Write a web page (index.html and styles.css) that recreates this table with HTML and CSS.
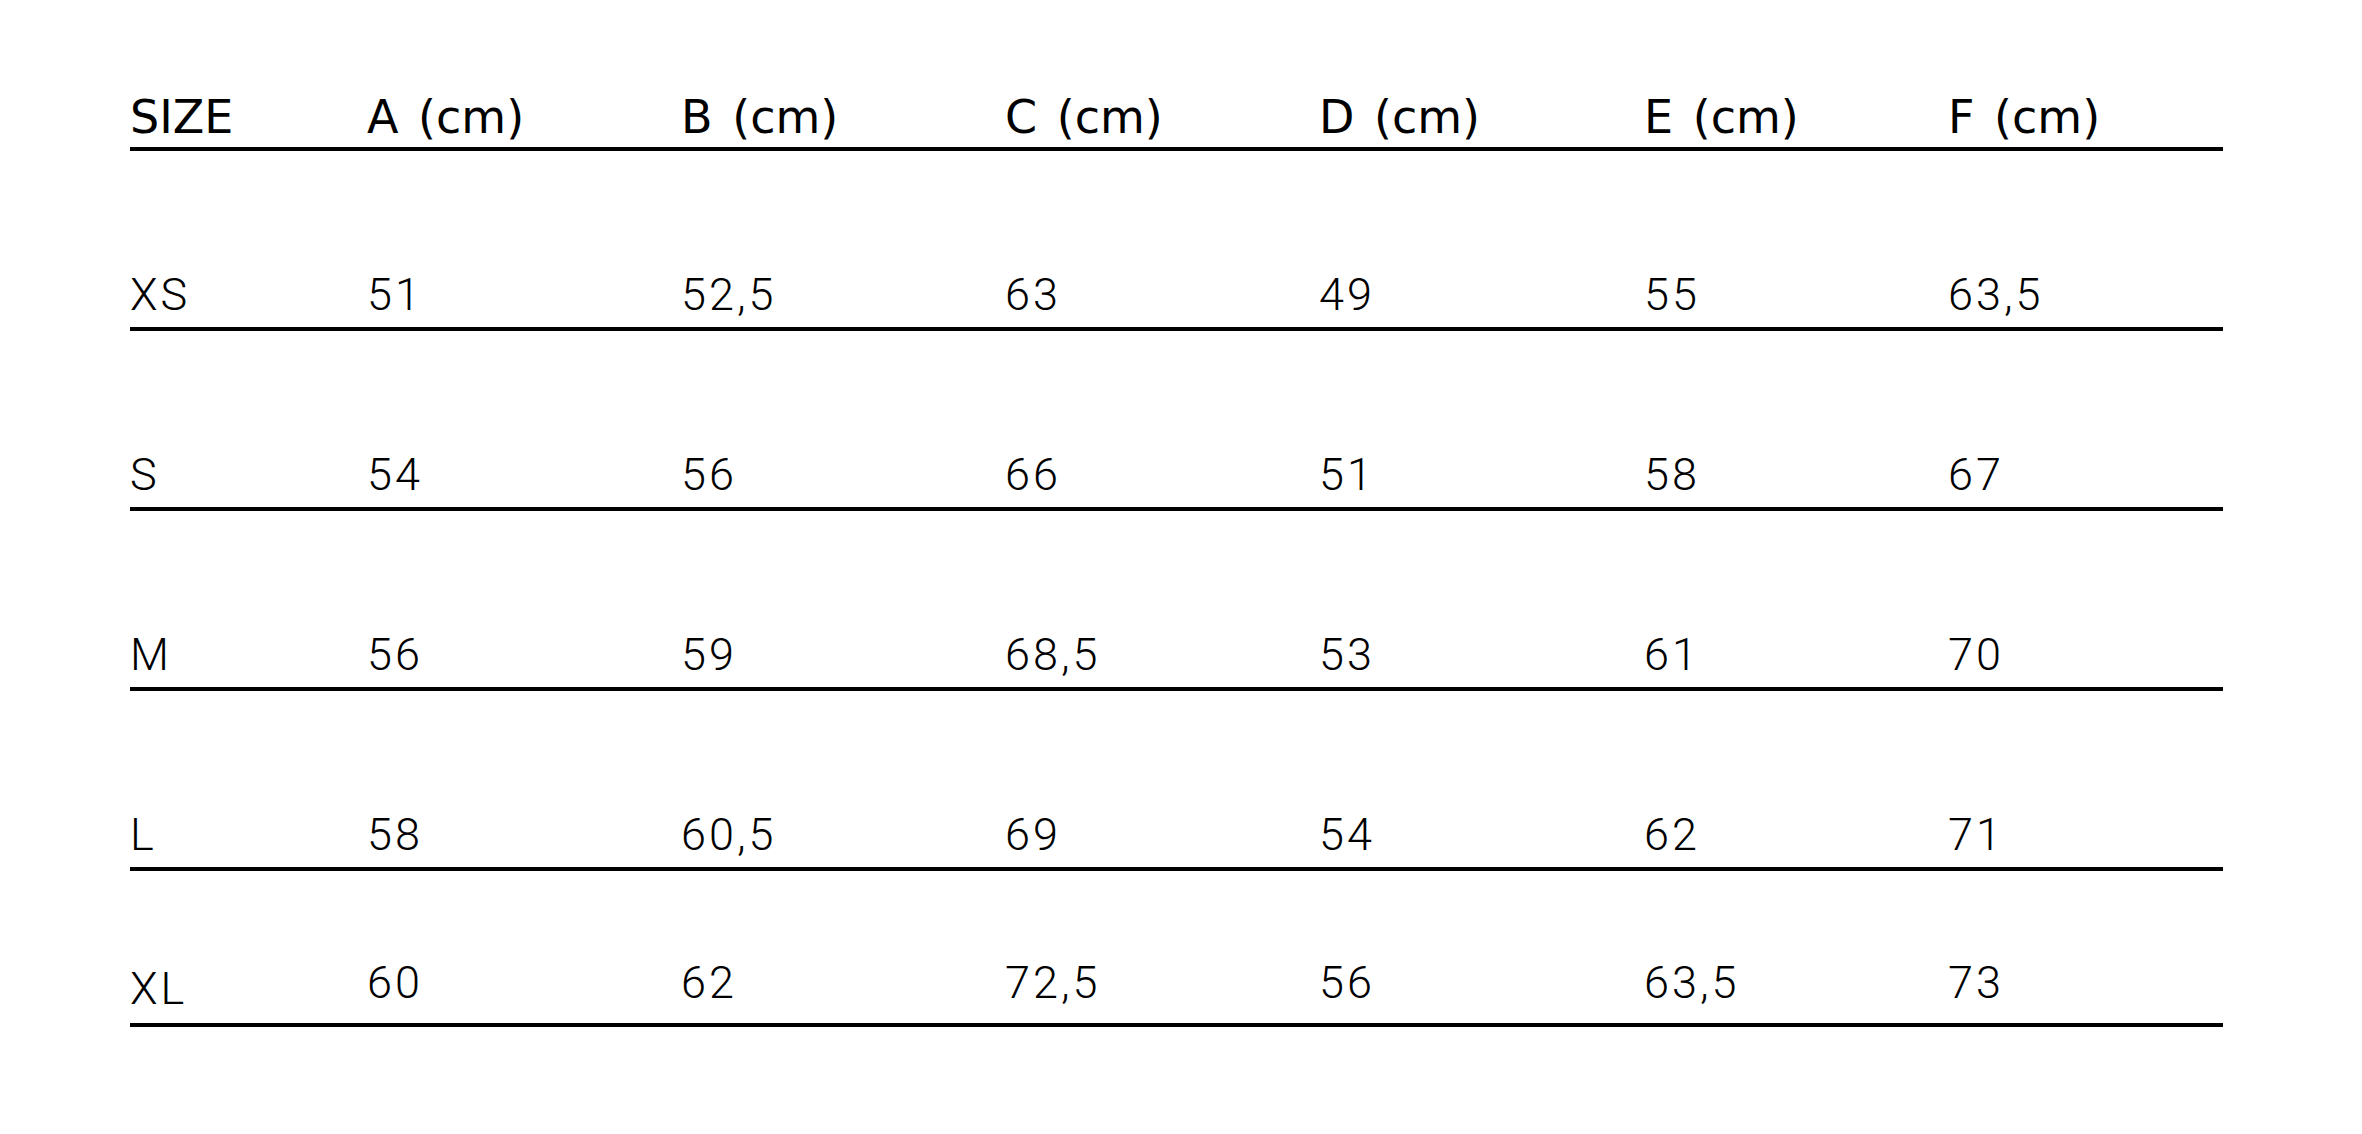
FILE: index.html
```
<!DOCTYPE html>
<html lang="en">
<head>
<meta charset="utf-8">
<title>Size chart</title>
<link rel="stylesheet" href="styles.css">
</head>
<body>
<div class="chart">
  <div class="row head">
    <div class="cell">SIZE</div>
    <div class="cell">A (cm)</div>
    <div class="cell">B (cm)</div>
    <div class="cell">C (cm)</div>
    <div class="cell">D (cm)</div>
    <div class="cell">E (cm)</div>
    <div class="cell">F (cm)</div>
  </div>
  <div class="row">
    <div class="cell">XS</div>
    <div class="cell">51</div>
    <div class="cell">52,5</div>
    <div class="cell">63</div>
    <div class="cell">49</div>
    <div class="cell">55</div>
    <div class="cell">63,5</div>
  </div>
  <div class="row">
    <div class="cell">S</div>
    <div class="cell">54</div>
    <div class="cell">56</div>
    <div class="cell">66</div>
    <div class="cell">51</div>
    <div class="cell">58</div>
    <div class="cell">67</div>
  </div>
  <div class="row">
    <div class="cell">M</div>
    <div class="cell">56</div>
    <div class="cell">59</div>
    <div class="cell">68,5</div>
    <div class="cell">53</div>
    <div class="cell">61</div>
    <div class="cell">70</div>
  </div>
  <div class="row">
    <div class="cell">L</div>
    <div class="cell">58</div>
    <div class="cell">60,5</div>
    <div class="cell">69</div>
    <div class="cell">54</div>
    <div class="cell">62</div>
    <div class="cell">71</div>
  </div>
  <div class="row last">
    <div class="cell label">XL</div>
    <div class="cell">60</div>
    <div class="cell">62</div>
    <div class="cell">72,5</div>
    <div class="cell">56</div>
    <div class="cell">63,5</div>
    <div class="cell">73</div>
  </div>
</div>
</body>
</html>
```
FILE: styles.css
```
html, body {
  margin: 0;
  padding: 0;
  background: #ffffff;
}

.chart {
  width: 2093px;
  margin-left: 130px;
  padding-top: 94px;
  color: #000000;
}

.row {
  display: grid;
  grid-template-columns: 237px 314px 324px 314px 325px 304px 1fr;
  align-items: end;
  height: 176px;
  border-bottom: 4px solid #000000;
  font-family: Roboto, "Liberation Sans", sans-serif;
  font-weight: 300;
  font-size: 45px;
  line-height: 45px;
  letter-spacing: 3px;
}

.row .cell {
  padding-bottom: 10px;
  white-space: nowrap;
}

.row.head {
  height: auto;
  font-family: "DejaVu Sans", "Liberation Sans", sans-serif;
  font-weight: 400;
  font-size: 46px;
  line-height: 46px;
  letter-spacing: 0;
  word-spacing: 5px;
}

.row.head .cell {
  padding-bottom: 7px;
}

.row.last {
  height: 152px;
}

.row.last .cell {
  padding-bottom: 18px;
}

.row.last .cell.label {
  padding-bottom: 12px;
}
```
